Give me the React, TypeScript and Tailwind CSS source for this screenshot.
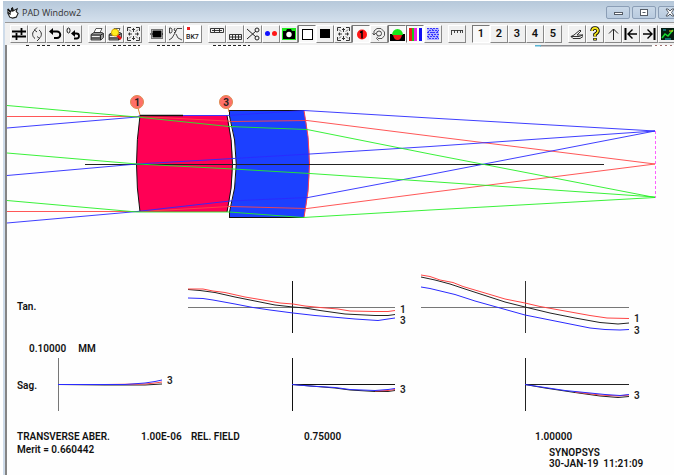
import React from "react";

type Tool = { label: string; icon: React.ReactNode; pressed?: boolean };

const Glyph = ({ children }: { children: React.ReactNode }) => (
  <svg viewBox="0 0 16 16" className="block h-4 w-4" fill="none" stroke="#000" aria-hidden="true">
    {children}
  </svg>
);

const expand = (
  <Glyph>
    <path d="M2.500 5V1.500H6M11 1.500h3.500V5M14.500 11v3.500H11M6 14.500H2.500V11" stroke="#333" />
    <path d="M8.500 2v4M8.500 14v-4M3 8h4M14 8h-4M7 3.500h3M7 12.500h3M4.500 6.500v3M12.500 6.500v3" stroke="#333" />
    <path d="M4 3.500l2 2M13 3.500l-2 2M4 12.500l2-2M13 12.500l-2-2" stroke="#555" />
  </Glyph>
);

const printer = (
  <>
    <path d="M5 6.500l2-4h6l-2 4z" fill="#fff" stroke="#333" strokeWidth=".8" />
    <path d="M2 8.500l3-2h8l1.500 1v4l-2.500 2.500H2z" fill="#999" stroke="#222" strokeWidth=".8" />
    <path d="M2 9h9.500l3-1.500M2 12h9.500M11.500 9v5" stroke="#222" />
    <path d="M3 10.500h7.500" stroke="#f0f0f0" />
  </>
);

const digit = (n: string) => <span className="text-[11px] leading-4">{n}</span>;

const groups: Tool[][] = [
  [
    { label: "Parameters", icon: <Glyph><path d="M1 5.500h14M1 10.500h14" strokeWidth="2" /><path d="M10.500 2v7M5.500 7v7" strokeWidth="1.800" /></Glyph> },
    { label: "Refresh", icon: <Glyph><path d="M6 12.500A5 5 0 0 1 6 4M10 4A5 5 0 0 1 10 12.500M8 1.500L5.500 4 8 6M8 10.500l2.500 2L8 15" stroke="#333" /></Glyph> },
    { label: "Undo", icon: <Glyph><path d="M5 5.500h5a3 3 0 0 1 0 6.500H7" strokeWidth="2" /><path d="M2 5.500l4-3.500v7z" fill="#000" stroke="none" /></Glyph> },
    { label: "Undo all", icon: <Glyph><ellipse cx="3.500" cy="4.500" rx="1.500" ry="2.500" strokeWidth=".9" /><path d="M9 7.500h2.500a2.500 2.500 0 0 1 0 5H9" strokeWidth="1.800" /><path d="M6 7.500l4-3.500v7z" fill="#000" stroke="none" /></Glyph> },
  ],
  [
    { label: "Print", icon: <Glyph>{printer}</Glyph> },
    { label: "Print preview", icon: <Glyph>{printer}<path d="M10 9l4 4" stroke="#e11" strokeWidth="2.500" /><circle cx="8" cy="6.500" r="3.500" fill="#ffed20" stroke="#ddb000" /></Glyph> },
    { label: "Fit", icon: expand },
  ],
  [
    { label: "Shade", icon: <Glyph><rect x="2.500" y="3.500" width="11" height="9" strokeDasharray="1 1" /><rect x="4" y="5" width="8" height="6" fill="#000" /><path d="M1 8h14" strokeDasharray="1 1" /></Glyph> },
    { label: "Ray fan", icon: <Glyph><path d="M2.500 2v5h1.500l1-1.500V3.500L4 2zM2 14l3-2 3-5 2-4.500h5M9 8l2 4 4 2M8 2l-1 2 2 1-2 2" stroke="#333" strokeWidth=".9" /></Glyph> },
    { label: "Glass BK7", icon: <svg viewBox="0 0 16 16" className="block h-4 w-4 bg-white" aria-hidden="true"><rect x="2" y="1" width="3" height="3" fill="#f02020" /><text x="1" y="13" className="text-[7px] font-medium" fill="#222">BK7</text></svg> },
  ],
  [
    { label: "Ruler top", icon: <Glyph><path d="M1.500 2.500h13v4h-13zM5.500 3v3M10.500 3v3M3 4.500h10" stroke="#222" strokeWidth=".9" /></Glyph> },
    { label: "Ruler bottom", icon: <Glyph><path d="M2.500 8.500h12v5h-12zM5.500 9v4M8.500 9v4M11.500 9v4M3 11h11" stroke="#222" strokeWidth=".9" /></Glyph> },
    { label: "Cut", icon: <Glyph><path d="M2 3l9 8M2 13l9-8" stroke="#222" /><circle cx="12" cy="4" r="2" stroke="#222" /><circle cx="12" cy="12" r="2" stroke="#222" /></Glyph> },
    { label: "Points", icon: <Glyph><circle cx="4.500" cy="7.500" r="2.500" fill="#1010ff" stroke="none" /><circle cx="11.500" cy="7.500" r="2.500" fill="#ff1515" stroke="none" /></Glyph> },
    { label: "Camera", icon: <Glyph><path d="M1 2h14v12H1z" fill="#20e820" stroke="none" /><path d="M2 5h3l1-2h4l1 2h3v8H2z" fill="#000" stroke="none" /><circle cx="8" cy="8.500" r="2.700" fill="#fff" stroke="none" /></Glyph> },
    { label: "Outline", pressed: true, icon: <Glyph><rect x="3.500" y="3.500" width="10" height="10" fill="#fff" /></Glyph> },
    { label: "Solid", icon: <Glyph><rect x="3" y="3" width="10" height="9" fill="#000" stroke="none" /></Glyph> },
    { label: "Zoom extents", icon: expand },
    { label: "Surface numbers", pressed: true, icon: <Glyph><circle cx="9" cy="8.500" r="5" fill="#ff1818" stroke="none" /><path d="M7 6.500l2-1v7" strokeWidth="1.500" /></Glyph> },
    { label: "Rotate", icon: <Glyph><circle cx="8" cy="7.500" r="2.500" stroke="#444" /><path d="M3 9V5l3-2.500h4L13.500 6v3.500L11 12.500H7M1.500 7L3 9l2-2M7 10.500l-1.500 2 2 2" stroke="#444" strokeWidth=".9" /></Glyph> },
    { label: "Spot", pressed: true, icon: <Glyph><path d="M1 8h15v7H1z" fill="#000" stroke="none" /><path d="M3 9a5.500 6 0 0 1 11 0z" fill="#18e818" stroke="none" /><path d="M4 9h9q-1 5-4.500 5T4 9z" fill="#f01818" stroke="none" /></Glyph> },
    { label: "Colours", pressed: true, icon: <Glyph><path d="M1 2h15v13H1z" fill="#fff" stroke="none" /><path d="M3.500 2v13" stroke="#f01818" strokeWidth="3" /><path d="M6 2v13" stroke="#18c818" strokeWidth="2" /><path d="M8.500 2v13" stroke="#f020e0" strokeWidth="3" /><path d="M13.500 2v13" stroke="#1010f0" strokeWidth="3" /></Glyph> },
    { label: "Pattern", icon: <Glyph><path d="M2 2h12v12H2z" fill="#b4b4ff" stroke="none" /><path d="M2 2.500h12M4 4.500h10M2 6.500h12M3 8.500h11M2 10.500h12M4 12.500h10" stroke="#3535ff" strokeDasharray="2 1" /><path d="M3.500 2v12M7.500 3v10M12.500 2v12" stroke="#4040ff" strokeDasharray="1 2" /></Glyph> },
  ],
  [{ label: "Scale", icon: <Glyph><path d="M2 4.500h12M2.500 4v5M5.500 4v3M8.500 4v3M11.500 4v3M13.500 4v3" stroke="#333" strokeWidth=".9" /></Glyph> }],
  [
    { label: "View 1", pressed: true, icon: digit("1") },
    { label: "View 2", icon: digit("2") },
    { label: "View 3", icon: digit("3") },
    { label: "View 4", icon: digit("4") },
    { label: "View 5", icon: digit("5") },
  ],
  [
    { label: "Annotate", icon: <Glyph><path d="M5 9l6-5 1 1-4 4h6M2 10.500h8l4-1.500M4 12.500h7l3-2M5 9l-3 1.500 2 2" stroke="#333" /></Glyph> },
    { label: "Help", icon: <Glyph><path d="M5 5q0-3 3-3t3 3q0 1.500-3 3.500v2M8 12v2.500" strokeWidth="3.500" /><path d="M5 5q0-3 3-3t3 3q0 1.500-3 3.500v2M8 12.500v1.500" stroke="#f4e41c" strokeWidth="1.800" /></Glyph> },
    { label: "Up", icon: <Glyph><path d="M8.500 14V3M4 7.500L8.500 3 13 7.500" stroke="#222" /></Glyph> },
    { label: "First", icon: <Glyph><path d="M2.500 2v12" strokeWidth="2" /><path d="M14 8H5M9.500 3.500L5 8l4.500 4.500" strokeWidth="1.400" /></Glyph> },
    { label: "Last", icon: <Glyph><path d="M13.500 2v12" strokeWidth="2" /><path d="M2 8h9M6.500 3.500L11 8l-4.500 4.500" strokeWidth="1.400" /></Glyph> },
    { label: "Image", icon: <Glyph><path d="M2 2h14v12H2z" fill="#061c10" stroke="none" /><path d="M3 12l3-4 3 2 5-6" stroke="#18dc30" strokeWidth="1.500" /><path d="M4 4h3M6 13h6" stroke="#20b8d0" /><path d="M10 5h4" stroke="#f0d020" /></Glyph> },
  ],
];

const ToolButton = ({ tool }: { tool: Tool }) => (
  <button
    type="button"
    aria-label={tool.label}
    aria-pressed={tool.pressed}
    className={
      tool.pressed
        ? "flex size-[18px] shrink-0 items-center justify-center border border-t-[#777] border-l-[#777] border-r-white border-b-white bg-[#f9f9f9]"
        : "flex size-[18px] shrink-0 items-center justify-center border border-t-white border-l-white border-r-[#888] border-b-[#888] bg-[#f0f0f0]"
    }
  >
    {tool.icon}
  </button>
);

const RED = "#ff4545";
const GREEN = "#25f025";
const BLUE = "#2a2aff";

const rays: [string, string][] = [
  [RED, "7,116.5 140,116.500 227,121 233,121.500 307,120.500 430,136 655,164"],
  [RED, "7,211.5 140,211.500 230,206.500 307,208.500 430,192.500 655,164"],
  [BLUE, "7,128 137,117 140,115.500 227,115.500 304,110.500 430,118 655,131"],
  [BLUE, "7,175.500 137,164 233,158.500 310,154 430,146.500 655,131"],
  [BLUE, "7,223 137,211.500 230,201 308,197.500 430,174.500 655,131"],
  [GREEN, "7,105.500 137,117 229,126.500 307,129.500 430,154 655,197.500"],
  [GREEN, "7,153 137,164 233,169 310,173.500 430,181.500 655,197"],
  [GREEN, "7,200.500 137,212 229,212 303,217.500 430,210 655,197.500"],
];

const SurfaceBadge = ({ x, n, tip }: { x: number; n: string; tip: string }) => (
  <g>
    <path d={tip} stroke="#e08030" />
    <circle cx={x} cy="102" r="6.500" fill="#ff7068" stroke="#dd8a50" />
    <text x={x} y="106" textAnchor="middle" fill="#222" className="text-[10px] font-bold">{n}</text>
  </g>
);

const LensDrawing = () => (
  <svg viewBox="7 45 667 225" className="block h-auto w-full" fill="none" role="img" aria-label="Lens layout with ray paths">
    <path d="M26 45.500h5M37 45.500h14M57 45.500h24M113 45.500h27M157 45.500h25M213 45.500h37" stroke="#222" strokeDasharray="3 2" />
    <path d="M540 45.500h112" stroke="#8c8c90" strokeWidth="2" />
    <path d="M535 45.500h6" stroke="#58b4d4" strokeWidth="2" />
    <path d="M655 45.500h19" stroke="#a07070" strokeDasharray="2 3" />
    <path d="M140 115.500H227Q238 164 227 212H140Q133 164 140 115.500z" fill="#ff0055" />
    <path d="M229.500 110.500H304Q315 164 304 217.500H229.500V212Q243 164 229.500 116z" fill="#1c40ff" />
    <path d="M140 212Q133 164 140 115.500M227 115.500Q238 164 227 212M229.500 217.500V212Q243 164 229.500 116V110.500" stroke="#111" />
    <path d="M229 110.500H304M229 217.500H304" stroke="#111" />
    <path d="M304 110.500Q315 164 304 217.500" stroke="#ff4050" />
    <path d="M57 164H604" stroke="none" />
    <path d="M85 164.500H604" stroke="#222" />
    {rays.map(([color, points]) => (
      <polyline key={points} points={points} stroke={color} strokeOpacity=".9" />
    ))}
    <path d="M140 115.500H183" stroke="#111" strokeWidth="1.500" />
    <path d="M655.500 131V198" stroke="#ff60ff" strokeDasharray="3 2" />
    <SurfaceBadge x={137} n="1" tip="M138 108L140 115" />
    <SurfaceBadge x={226} n="3" tip="M228 108L229 112" />
  </svg>
);

type Curve = [string, string];
const Chart = ({ box, axes, axisColor, curves, marks, name }: {
  box: string; axes: string; axisColor: string; curves: Curve[]; marks: [number, number, string][]; name: string;
}) => (
  <svg viewBox={box} className="block h-auto w-full" fill="none" role="img" aria-label={name}>
    <path d={axes} stroke={axisColor} />
    {curves.map(([color, points]) => (
      <polyline key={points} points={points} stroke={color} />
    ))}
    {marks.map(([x, y, t]) => (
      <text key={y} x={x} y={y} fill="#222" className="text-[10px] font-semibold">{t}</text>
    ))}
  </svg>
);

const K = "#222";

export default function App() {
  return (
    <div className="flex min-h-screen flex-col overflow-hidden bg-white pt-px pl-[3px] font-[Roboto,'Liberation_Sans',sans-serif] text-[10px] font-semibold text-[#111]">
      <header className="flex h-[21px] items-center overflow-hidden bg-linear-to-b from-[#b6c8da] to-[#d4e0ed] pt-0.5 pl-1">
        <svg viewBox="0 0 13 13" className="mr-[3px] size-3 shrink-0" aria-hidden="true">
          <path d="M1 3l3 2 2-4 1 3 4-2-1 3 2 2-2 4-4 1-3-1-2-4z" fill="#fff" stroke="#222" strokeWidth="1.200" />
          <path d="M1 2l3 4M5 1l1 4M1 6l3 2" stroke="#111" strokeWidth="1.500" />
        </svg>
        <h1 className="font-['Open_Sans',sans-serif] text-[9px] font-normal text-[#333]">PAD Window2</h1>
        <div className="-mr-2 ml-auto flex shrink-0 gap-0.5">
          {["Minimize", "Maximize", "Close"].map((label) => (
            <button key={label} type="button" aria-label={label} className="flex h-[13px] w-6 items-center justify-center rounded-xs border border-[#8b9eb6] bg-linear-to-b from-[#c8d7e7] to-[#b9cbdf]">
              <svg viewBox="0 0 12 9" className="h-[9px] w-3" fill="#fff" stroke="#555c66" aria-hidden="true">
                {label === "Minimize" && <rect x="2.500" y="4.500" width="8" height="2" />}
                {label === "Maximize" && <><rect x="2.500" y="1.500" width="7" height="6" /><path d="M4.500 4.500h3" /></>}
                {label === "Close" && <path d="M2 1h2l2 2 2-2h2L7.500 4.500 10 8H8L6 6 4 8H2l2.500-3.500z" />}
              </svg>
            </button>
          ))}
        </div>
      </header>

      <div className="flex grow flex-col border-l-2 border-[#cfdcea]">
        <div role="toolbar" aria-label="Drawing tools" className="flex h-[23px] items-center gap-1.5 overflow-hidden border-t border-[#999] bg-[#f0f0f0] pl-[5px]">
          {groups.map((group, i) => (
            <div key={i} className="flex shrink-0">
              {group.map((tool) => <ToolButton key={tool.label} tool={tool} />)}
            </div>
          ))}
        </div>

        <main className="grow border-l-2 border-[#858585] bg-[#fefefe]">
          <LensDrawing />

          <section aria-label="Ray aberrations">
            <div className="grid grid-cols-[51fr_130fr_233fr_253fr] items-center">
              <span className="pl-2.5">Tan.</span>
              <span />
              <Chart
                name="Tangential, field 0.75"
                box="188 270 233 72"
                axisColor="#777"
                axes="M188 307.500H395M292.500 281V333"
                curves={[
                  ["#111", "292.500,281 292.500,333"],
                  [K, "188,289.500 200,290.500 215,292.500 235,297 255,301 275,305 293,307 305,308 320,310.500 345,314 375,315.500 388,315.500 395,314.500"],
                  [RED, "188,289 203,289 213,291 225,292.500 245,297 263,300 280,303 293,304 305,306 320,307.500 338,309 350,311 375,311.500 388,311.500 395,310.500"],
                  [BLUE, "188,298 203,298.500 213,300 235,304 253,307.500 270,310 293,313 315,315.500 338,317.500 355,319 378,320.500 388,319 395,318"],
                ]}
                marks={[[400, 313, "1"], [400, 324, "3"]]}
              />
              <Chart
                name="Tangential, field 1.0"
                box="421 270 253 72"
                axisColor="#777"
                axes="M421 307.500H629M525.500 281V333"
                curves={[
                  ["#333", "525.500,281 525.500,333"],
                  [K, "421,277 435,280 450,284 465,289 485,295.500 505,302 525,307 550,313 575,318 600,322.500 618,324 629,323"],
                  [RED, "421,275 430,276.500 440,280 453,282.500 463,286.500 485,293 505,299 525,303 540,306.500 565,311 590,315.500 607,318 629,318.500"],
                  [BLUE, "421,287 430,288.500 455,294.500 475,301 500,308 525,315 545,319 570,324 590,328 605,329.500 620,330 629,329.500"],
                ]}
                marks={[[634, 322, "1"], [634, 334, "3"]]}
              />
            </div>

            <div className="flex gap-3 pl-[22px] leading-[14px]">
              <span>0.10000</span>
              <span>MM</span>
            </div>

            <div className="grid grid-cols-[51fr_130fr_233fr_253fr] items-center">
              <span className="pl-2.5">Sag.</span>
              <Chart
                name="Sagittal, on axis"
                box="58 356 130 58"
                axisColor="#777"
                axes="M58.500 358V411"
                curves={[
                  [K, "58,384.500 105,385 145,385 162,384"],
                  [RED, "105,384.500 145,384 155,383 162,382"],
                  [BLUE, "58,384.500 125,384.500 145,383 155,381.500 162,380"],
                ]}
                marks={[[167, 384, "3"]]}
              />
              <Chart
                name="Sagittal, field 0.75"
                box="188 356 233 58"
                axisColor="#111"
                axes="M292.500 358V411M292 384.500H395"
                curves={[
                  [K, "292,384.500 335,388 350,390 375,391.500 388,391.500 395,390.500"],
                  [RED, "375,391 388,390.500 395,389.500"],
                  [BLUE, "292,384.500 310,386 335,387.500 350,389.500 375,390.500 388,389.500 395,388.500"],
                ]}
                marks={[[400, 393, "3"]]}
              />
              <Chart
                name="Sagittal, field 1.0"
                box="421 356 253 58"
                axisColor="#222"
                axes="M525.500 358V411M525 384.500H629"
                curves={[
                  [K, "525,384.500 545,388 575,392.500 600,396 618,397.500 629,396.500"],
                  [RED, "575,392 600,395 618,396 629,395"],
                  [BLUE, "525,384.500 545,387.500 565,390.500 590,393 605,394.500 620,395.500 629,394.500"],
                ]}
                marks={[[634, 399, "3"]]}
              />
            </div>
          </section>

          <footer className="pt-4 pl-2.5 leading-[13px] whitespace-nowrap">
            <div className="grid grid-cols-[124fr_50fr_113fr_231fr_139fr]">
              <span>TRANSVERSE ABER.</span>
              <span>1.00E-06</span>
              <span>REL. FIELD</span>
              <span>0.75000</span>
              <span>1.00000</span>
            </div>
            <div className="grid grid-cols-[532fr_125fr]">
              <span>Merit = 0.660442</span>
              <div className="pt-1 leading-[11px]">
                <p>SYNOPSYS</p>
                <p className="whitespace-pre">30-JAN-19  11:21:09</p>
              </div>
            </div>
          </footer>
        </main>
      </div>
    </div>
  );
}
